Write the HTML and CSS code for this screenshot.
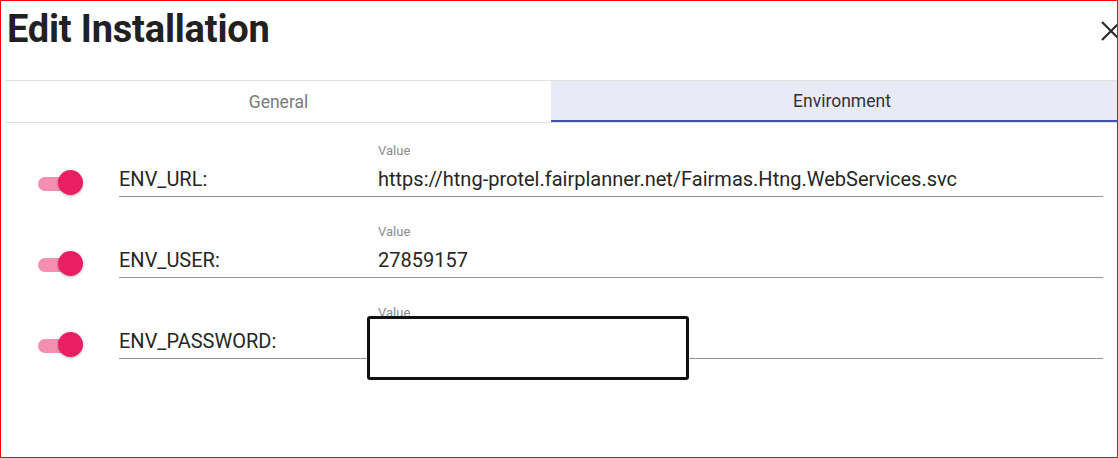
FILE: index.html
```html
<!DOCTYPE html>
<html lang="en">
<head>
<meta charset="utf-8">
<title>Edit Installation</title>
<link rel="stylesheet" href="styles.css">
</head>
<body>
<div class="frame">
  <div class="dialog">
    <div class="header">
      <h1 class="title">Edit Installation</h1>
      <button class="close" aria-label="Close">
        <svg viewBox="0 0 24 24" width="24" height="24"><path d="M3 3 L21 21 M21 3 L3 21" stroke="#2b2b2b" stroke-width="2.2" fill="none"/></svg>
      </button>
    </div>
    <div class="tabs">
      <div class="tab tab-general">General</div>
      <div class="tab tab-active">Environment</div>
    </div>
    <div class="rows">
      <div class="row">
        <div class="toggle"><span class="track"></span><span class="thumb"></span></div>
        <div class="field">
          <div class="key">ENV_URL:</div>
          <div class="value">
            <div class="value-label">Value</div>
            <div class="value-text">https://htng-protel.fairplanner.net/Fairmas.Htng.WebServices.svc</div>
          </div>
        </div>
      </div>
      <div class="row">
        <div class="toggle"><span class="track"></span><span class="thumb"></span></div>
        <div class="field">
          <div class="key">ENV_USER:</div>
          <div class="value">
            <div class="value-label">Value</div>
            <div class="value-text">27859157</div>
          </div>
        </div>
      </div>
      <div class="row">
        <div class="toggle"><span class="track"></span><span class="thumb"></span></div>
        <div class="field">
          <div class="key">ENV_PASSWORD:</div>
          <div class="value">
            <div class="value-label">Value</div>
            <div class="value-text">&nbsp;</div>
            <div class="redact"></div>
          </div>
        </div>
      </div>
    </div>
  </div>
</div>
</body>
</html>
```

FILE: styles.css
```css
* { box-sizing: border-box; }
html, body { margin: 0; padding: 0; background: #fff; }
body { font-family: Roboto, "Noto Sans", "Liberation Sans", sans-serif; color: #222; }

.frame {
  width: 1118px;
  height: 458px;
  border: 1px solid #ff0000;
  overflow: hidden;
  position: relative;
}

.dialog {
  width: 1132px;
  padding-left: 5px;
}

.header {
  display: flex;
  align-items: flex-start;
  justify-content: space-between;
  height: 79px;
}

.title {
  margin: 0;
  padding-left: 1px;
  font-size: 38px;
  font-weight: 700;
  line-height: 56px;
  color: #212121;
  letter-spacing: -0.2px;
}

.close {
  margin: 18px 10px 0 0;
  padding: 0;
  border: 0;
  background: transparent;
  width: 24px;
  height: 24px;
}
.close svg { display: block; }

.tabs {
  display: flex;
  border-top: 1px solid #e0e0e0;
  border-bottom: 1px solid #e0e0e0;
  height: 43px;
}
.tab {
  display: flex;
  align-items: center;
  justify-content: center;
  font-size: 17.5px;
  height: 41px;
}
.tab-general {
  width: 545px;
  color: #7a7a7a;
}
.tab-active {
  flex: 1;
  background: #e8eaf5;
  color: #333;
  border-bottom: 2px solid #3f51b5;
}

.rows {
  display: flex;
  flex-direction: column;
  gap: 27px;
  padding-top: 20px;
}

.row {
  display: flex;
  align-items: flex-end;
}

.toggle {
  position: relative;
  width: 46px;
  height: 25px;
  margin: 0 35px 2px 32px;
  flex: none;
}
.track {
  position: absolute;
  left: 0;
  top: 7px;
  width: 42px;
  height: 14px;
  border-radius: 7px;
  background: #f48fb1;
}
.thumb {
  position: absolute;
  left: 20px;
  top: 0;
  width: 25px;
  height: 25px;
  border-radius: 50%;
  background: #e91e63;
  box-shadow: 0 1px 3px rgba(0,0,0,0.3);
}

.field {
  display: flex;
  width: 984px;
  border-bottom: 1px solid #949494;
}

.key {
  width: 259px;
  font-size: 20px;
  line-height: 24px;
  padding-bottom: 5px;
  align-self: flex-end;
  color: #262626;
}

.value {
  position: relative;
  flex: 1;
  padding-bottom: 5px;
}
.value-label {
  font-size: 13px;
  line-height: 16px;
  color: #8c8c8c;
  margin-bottom: 8px;
}
.value-text {
  font-size: 20px;
  line-height: 24px;
  color: #262626;
}

.redact {
  position: absolute;
  left: -11px;
  top: 11px;
  width: 322px;
  height: 64px;
  border: 3px solid #111;
  border-radius: 3px;
  background: #fff;
}
```
